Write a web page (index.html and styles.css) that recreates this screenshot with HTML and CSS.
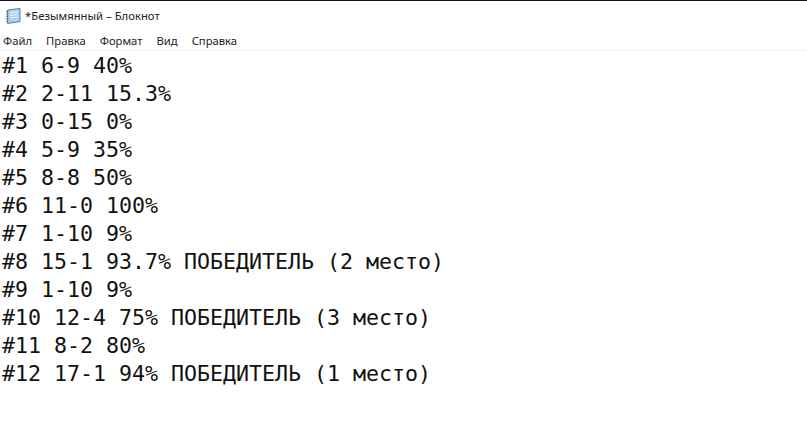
FILE: index.html
```html
<!DOCTYPE html>
<html>
<head>
    <title>*Безымянный – Блокнот</title>
    <link rel="stylesheet" href="styles.css">
</head>
<body>
    <div class="window">
        <div class="title-bar">
            <svg class="app-icon" width="16" height="18" viewBox="0 0 16 18">
                <path d="M2.5 3 L15 1.5 L15 14.5 L2.5 16.5 Z" fill="#a9d3ec" stroke="#5f7f96" stroke-width="1"/>
                <path d="M1 4.5 L3.5 4 M1 7 L3.5 6.5 M1 9.5 L3.5 9 M1 12 L3.5 11.5 M1 14.5 L3.5 14" stroke="#6b7c88" stroke-width="1"/>
                <path d="M5 6 L13 5 M5 8.5 L13 7.5 M5 11 L13 10" stroke="#e8f4fb" stroke-width="1"/>
            </svg>
            <span class="title-text">*Безымянный – Блокнот</span>
        </div>
        <div class="menu-bar">
            <span>Файл</span>
            <span>Правка</span>
            <span>Формат</span>
            <span>Вид</span>
            <span>Справка</span>
        </div>
        <div class="editor">
            <div>#1 6-9 40%</div>
            <div>#2 2-11 15.3%</div>
            <div>#3 0-15 0%</div>
            <div>#4 5-9 35%</div>
            <div>#5 8-8 50%</div>
            <div>#6 11-0 100%</div>
            <div>#7 1-10 9%</div>
            <div>#8 15-1 93.7% ПОБЕДИТЕЛЬ (2 место)</div>
            <div>#9 1-10 9%</div>
            <div>#10 12-4 75% ПОБЕДИТЕЛЬ (3 место)</div>
            <div>#11 8-2 80%</div>
            <div>#12 17-1 94% ПОБЕДИТЕЛЬ (1 место)</div>
        </div>
    </div>
</body>
</html>
```

FILE: styles.css
```css
html, body {
    height: 100%;
}
body {
    margin: 0;
    background-color: #fff;
    overflow: hidden;
}
.window {
    height: 100%;
    box-sizing: border-box;
    border-top: 1px solid #111;
    display: flex;
    flex-direction: column;
}
.title-bar {
    height: 29px;
    display: flex;
    align-items: center;
    padding-left: 5px;
    font-family: "Noto Sans", sans-serif;
    font-size: 11.3px;
    color: #222;
}
.app-icon {
    margin-right: 4px;
}
.menu-bar {
    height: 20px;
    display: flex;
    gap: 14px;
    align-items: center;
    padding-left: 3px;
    font-family: "Noto Sans", sans-serif;
    font-size: 11.25px;
    color: #222;
    border-bottom: 1px solid #f0f0f0;
}
.editor {
    padding-left: 2px;
    padding-top: 1px;
    font-family: "DejaVu Sans Mono", monospace;
    font-size: 21.6px;
    line-height: 28px;
    color: #111;
}
```
